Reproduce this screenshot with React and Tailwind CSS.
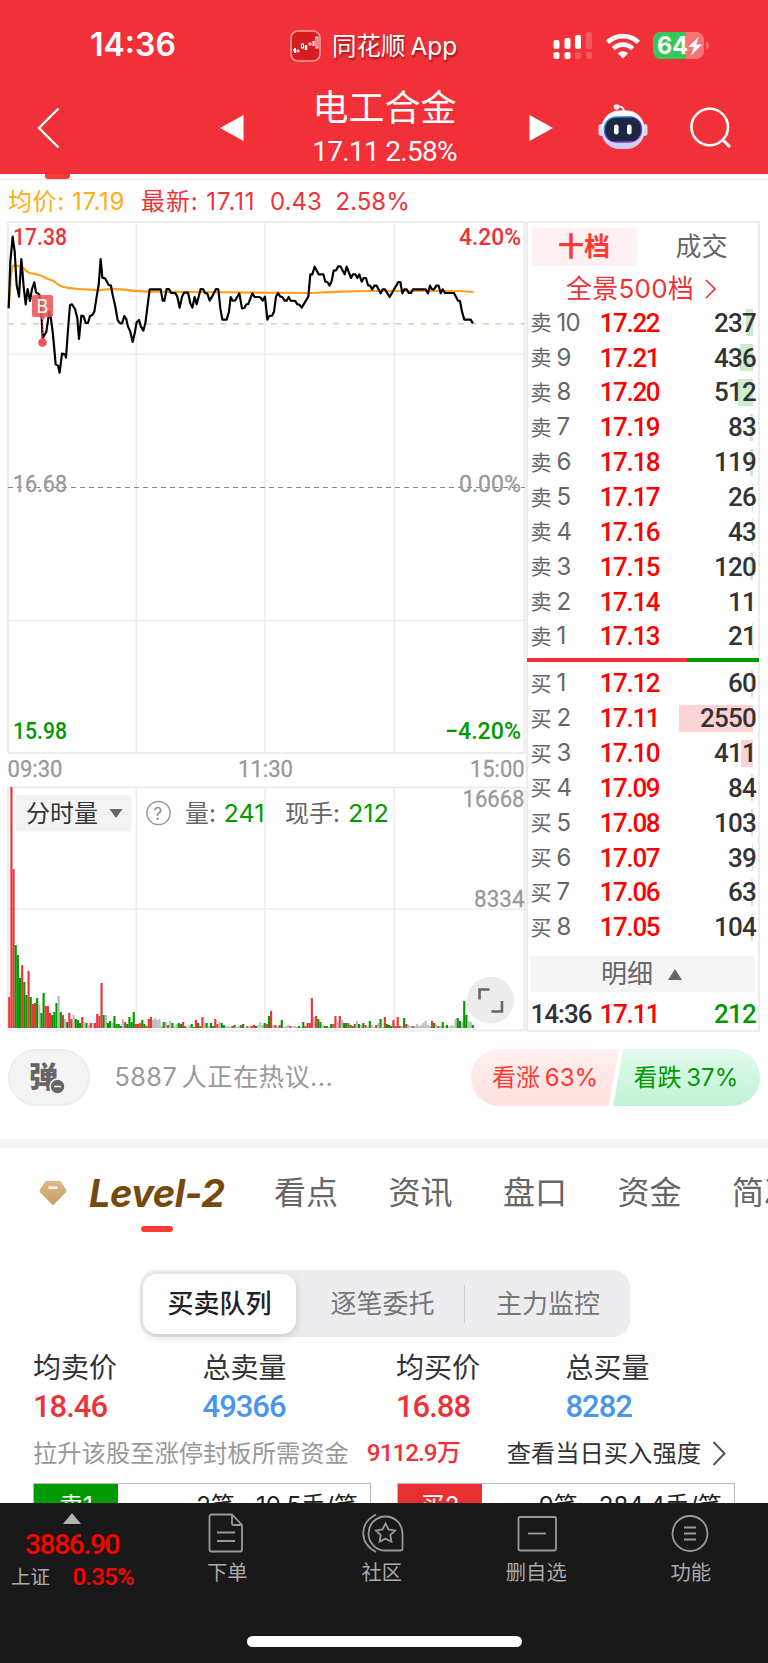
import React from 'react';

const NUM = "font-['Roboto','Noto_Sans_CJK_SC',sans-serif]";

const sells = [
  { label: '10', price: '17.22', qty: 237, bar: 7 },
  { label: '9', price: '17.21', qty: 436, bar: 13 },
  { label: '8', price: '17.20', qty: 512, bar: 15 },
  { label: '7', price: '17.19', qty: 83, bar: 3 },
  { label: '6', price: '17.18', qty: 119, bar: 3 },
  { label: '5', price: '17.17', qty: 26, bar: 1 },
  { label: '4', price: '17.16', qty: 43, bar: 1 },
  { label: '3', price: '17.15', qty: 120, bar: 3 },
  { label: '2', price: '17.14', qty: 11, bar: 0 },
  { label: '1', price: '17.13', qty: 21, bar: 1 },
];

const buys = [
  { label: '1', price: '17.12', qty: 60, bar: 2 },
  { label: '2', price: '17.11', qty: 2550, bar: 74 },
  { label: '3', price: '17.10', qty: 411, bar: 12 },
  { label: '4', price: '17.09', qty: 84, bar: 2 },
  { label: '5', price: '17.08', qty: 103, bar: 2 },
  { label: '6', price: '17.07', qty: 39, bar: 1 },
  { label: '7', price: '17.06', qty: 63, bar: 2 },
  { label: '8', price: '17.05', qty: 104, bar: 2 },
];

// price curve, in thirds of a pixel
const morning =
  '26,280 31,140 38,65 44,110 50,210 57,245 64,132 71,215 77,268 83,222 90,258 96,222 103,202 108,232 118,238 124,290 128,370 139,350 148,290 152,305 158,350 162,392 167,448 174,452 179,473 186,416 195,418 198,428 204,345 210,270 216,268 225,282 232,310 237,372 244,302 251,304 257,324 264,324 270,303 277,300 283,290 290,245 296,210 302,132 307,188 315,190 326,210 333,212 338,240 345,270 353,315 360,325 366,325 373,303 379,313 384,335 391,350 398,381 404,355 410,322 417,315 423,335 430,347 436,325 443,270 449,223 482,223 488,257 493,257 500,222 507,222 513,234 526,234 532,245 539,278 546,245 552,233 564,233 571,265 577,278 584,246 590,268 596,245 602,222 609,222 615,234 622,236 629,257 636,245 648,222 655,223 661,280 667,314 680,314 687,290 692,246 698,257 706,256 718,235 726,280 733,279 739,268 745,267 757,235 764,246 780,246';
const afternoon =
  '0,246 8,257 15,245 22,314 28,303 36,302 42,290 48,245 54,234 61,245 67,246 74,257 80,257 86,246 92,257 106,258 112,268 118,269 125,278 145,245 151,178 157,178 164,155 176,178 190,178 196,200 202,201 209,212 215,198 221,167 228,166 235,154 241,154 254,178 260,155 273,189 279,178 286,178 292,189 298,178 305,200 311,189 318,189 324,211 330,212 337,223 343,212 350,212 362,235 368,223 375,223 389,246 415,201 421,201 427,235 433,223 440,223 446,234 453,234 459,223 497,223 504,235 510,212 516,223 522,223 529,212 536,212 542,235 548,223 555,234 582,234 594,257 600,258 606,290 613,314 632,314 639,325';
const average =
  'M26,280 C30,215 33,158 39,152 C50,148 62,155 72,161 C78,166 80,173 94,175 C110,178 122,180 130,185 C140,193 150,193 160,198 C172,206 172,212 192,216 C215,223 250,222 300,226 C320,222 350,222 375,224 C400,229 430,230 470,230 L600,231 L780,233 L930,234 L1020,230 L1110,228 L1380,228 L1420,231';

// one bar per minute: r = up, g = down, n = flat
const volume =
  'r31 r241 r159 g83 g73 g50 r63 g46 g33 r57 g31 r24 r25 g30 n23 g15 g35 r22 r22 r15 g13 g16 g25 n32 g16 r13 n9 g6 r15 r9 n13 g9 g8 g5 r11 n6 g5 n3 r5 n5 r5 r14 r12 r45 g13 n13 g5 g7 n5 g12 g4 g4 g2 n9 r6 g4 g11 g6 g16 r4 r4 r5 g8 g4 r2 r9 r11 n8 n10 n8 n9 n2 g6 n6 r3 n7 g5 n2 n4 g5 g4 r6 r2 n1 n3 g4 g1 r8 g5 r2 r11 n5 g5 n2 g5 g2 r9 r4 n6 g5 g3 n2 n2 n1 r2 g3 n1 n2 r3 g4 n1 r2 n2 r2 r3 g2 n3 n6 n3 g5 r4 g12 r17 n3 r3 n2 r3 g8 n1 n2 n3 r2 n2 n2 n1 g2 n1 g6 r2 r5 r5 r30 n11 r12 g9 g6 n3 g2 g2 n1 g4 r4 r12 n6 r12 n8 g5 g5 r5 g3 g2 r4 n7 g4 n3 g5 r3 n2 g7 n3 n1 r3 n5 g9 n1 r11 g4 g3 g2 r8 r2 r11 r2 n2 g10 r4 n3 n2 r2 n2 n4 n2 n3 n5 n7 n3 n2 r7 g5 n3 r2 n2 g6 n2 g3 n1 n3 n2 n9 g10 g7 n6 g27 g13 n7 n6 g3'.split(' ');
const barColor = { r: '#ee3338', g: '#009900', n: '#bbbbbb' };

function StatusBar() {
  return (
    <div className="h-[90px] pl-[90px] pr-[58px] flex items-center">
      <span className="w-[200px] text-[32px] leading-none font-semibold">14:36</span>
      <div className="flex items-center gap-[11px] mt-[2px] whitespace-nowrap">
        <svg width="31" height="32" viewBox="0 0 31 32">
          <rect x="1" y="1" width="29" height="30" rx="7" fill="#d81d22" stroke="#f79a9c" strokeWidth="1.6" />
          <g stroke="#fff" strokeWidth="1" fill="#fff">
            <path d="M3 20h2M5 18v5" strokeWidth="2" />
            <circle cx="8" cy="21" r="1.2" fill="none" />
            <rect x="11.5" y="14" width="2" height="4" fill="none" />
            <path d="M16 15v5" strokeWidth="2.5" />
            <circle cx="20" cy="14" r="1.2" fill="none" />
            <path d="M23.5 11v5" strokeWidth="2" />
            <rect x="26" y="7" width="2" height="11" fill="none" />
          </g>
        </svg>
        <span className="text-[24.5px] leading-none [word-spacing:-2px] [text-shadow:1px_2px_2px_rgba(90,0,0,0.6)]">同花顺 App</span>
      </div>
      <div className="ml-auto flex items-center justify-end gap-[13px] mt-[2px]">
        <svg width="40" height="28" viewBox="0 0 40 28" fill="#fff">
          <rect x="0.5" y="8" width="6" height="9" rx="2" />
          <rect x="11.5" y="6" width="6" height="11" rx="2" />
          <rect x="22" y="3" width="6" height="14" rx="2" />
          <rect x="33" y="0" width="6" height="17" rx="2" opacity="0.2" />
          <rect x="0.5" y="20" width="6" height="7" rx="2" />
          <rect x="11.5" y="20" width="6" height="7" rx="2" />
          <rect x="22" y="20" width="6" height="7" rx="2" opacity="0.2" />
          <rect x="33" y="20" width="6" height="7" rx="2" opacity="0.2" />
        </svg>
        <svg width="34" height="26" viewBox="0 0 34 26" fill="none" stroke="#fff" strokeWidth="4.6">
          <path d="M1.6 9.4a22 22 0 0 1 30.8 0" />
          <path d="M7.4 15.6a13.7 13.7 0 0 1 19.2 0" />
          <path d="M17 25.5l-5.2-5.2a7.4 7.4 0 0 1 10.4 0z" fill="#fff" stroke="none" />
        </svg>
        <svg width="57" height="28" viewBox="0 0 57 28">
          <clipPath id="battery"><rect width="51" height="27" rx="8" /></clipPath>
          <g clipPath="url(#battery)">
            <rect width="51" height="27" fill="#f77377" />
            <rect width="33" height="27" fill="#34c759" />
          </g>
          <path d="M53 9.5c4 1.5 4 6.500 0 8z" fill="#f77377" />
          <text x="4" y="22" fontSize="24" fontWeight="700" fill="#fff" textLength="31" lengthAdjust="spacingAndGlyphs">64</text>
          <path d="M46 4.500l-11 10.500h6l-3 8.500 11-11h-6z" fill="#fff" />
        </svg>
      </div>
    </div>
  );
}

function Robot() {
  return (
    <svg width="50" height="48" viewBox="0 0 50 48">
      <defs>
        <linearGradient id="shell" x1="0" y1="0" x2="0" y2="1">
          <stop offset="0" stopColor="#fff" />
          <stop offset="1" stopColor="#c9c8ee" />
        </linearGradient>
        <linearGradient id="rim" x1="0" y1="0" x2="1" y2="1">
          <stop offset="0" stopColor="#2cc7e6" />
          <stop offset="0.5" stopColor="#3d37c9" />
          <stop offset="1" stopColor="#b04be8" />
        </linearGradient>
      </defs>
      <path d="M18 4.5c4-2 7.5-1 8 4" fill="none" stroke="#f3e9f5" strokeWidth="2" />
      <circle cx="18.5" cy="4" r="2.8" fill="#f5eef8" />
      <rect x="0.5" y="21" width="6" height="12" rx="3" fill="#dcd9f3" />
      <rect x="43.5" y="21" width="6" height="12" rx="3" fill="#dcd9f3" />
      <rect x="3.5" y="7.500" width="43" height="38.5" rx="18" fill="url(#shell)" />
      <rect x="6.500" y="14" width="37" height="25" rx="11.500" fill="#1d2744" stroke="url(#rim)" strokeWidth="1.3" />
      <rect x="16" y="21.5" width="4.600" height="10" rx="2.3" fill="#fff" />
      <rect x="29" y="21.5" width="4.600" height="10" rx="2.3" fill="#fff" />
    </svg>
  );
}

function Header() {
  return (
    <div className="h-[174px] bg-[#f23038] text-white">
      <StatusBar />
      <div className="h-[84px] flex items-start">
        <div className="w-[220px] pl-[36px] pt-[17px]">
          <svg width="26" height="42" viewBox="0 0 26 42" fill="none" stroke="#fff" strokeWidth="2.4">
            <path d="M22.5 1.5L3 21l19.5 19.5" />
          </svg>
        </div>
        <svg width="24" height="26" viewBox="0 0 24 26" className="mt-[25px]"><path d="M0 13L23.5 0v26z" fill="#fff" /></svg>
        <div className="w-[285px] pr-[4px] flex flex-col items-center">
          <span className="text-[36px] leading-[36px] whitespace-nowrap">电工合金</span>
          <span className={`${NUM} text-[28px] leading-[32px] mt-[10px] whitespace-nowrap tracking-[-0.7px]`}>17.11 2.58%</span>
        </div>
        <svg width="24" height="26" viewBox="0 0 24 26" className="mt-[25px]"><path d="M24 13L0.5 0v26z" fill="#fff" /></svg>
        <div className="ml-[45px] mt-[13px]"><Robot /></div>
        <svg width="42" height="42" viewBox="0 0 42 42" fill="none" stroke="#fff" strokeWidth="2.6" className="ml-[42px] mt-[17px]">
          <circle cx="19.7" cy="20" r="18.3" />
          <path d="M32.5 32.5l7.5 7.5" strokeWidth="3" />
        </svg>
      </div>
    </div>
  );
}

function Summary() {
  return (
    <div className="h-[47px] flex flex-col">
      <div className="h-[6px] border-b border-[#e8e8e8] pl-[45px]">
        <div className="w-[25px] h-[5px] bg-[#ff3a33] rounded-b-[3px]"></div>
      </div>
      <div className="flex pl-[8px] pt-[7px] text-[24px] leading-[30px] text-[#ee3338] whitespace-pre">
        <span className="text-[#ffae13] w-[133px] tracking-[0.6px]">均价: 17.19</span>
        <span className="w-[129px] tracking-[0.9px]">最新: 17.11</span>
        <span className="w-[65.5px]">0.43</span>
        <span>2.58%</span>
      </div>
    </div>
  );
}

function Chart() {
  return (
    <svg width="526" height="811" viewBox="0 221 526 811" className="shrink-0 overflow-visible font-['Roboto','Noto_Sans_CJK_SC',sans-serif]">
      <g fill="none" stroke="#ececec" strokeWidth="1.5">
        <path d="M8 222H525M8 753H525M8 787.5H525M8 1030.5H525M8 222V753M524.5 222V753M8 787V1031M524.5 787V1031" strokeWidth="2" />
        <path d="M136.300 222V753M265 222V753M394.300 222V753M8 354.300H524M8 620.500H524" />
        <path d="M136.300 787V1031M265 787V1031M394.300 787V1031M8 909.300H524" />
      </g>
      <path d="M8 487.5H525" stroke="#888" strokeWidth="1.2" strokeDasharray="5 4" />
      <path d="M8 323.7H525" stroke="#e3cba7" strokeWidth="1.6" strokeDasharray="6 6.5" />
      <g transform="translate(0 215) scale(0.33333)" fill="none" strokeLinejoin="round">
        <path d={average} stroke="#ff9f1c" strokeWidth="6.5" />
        <polyline points={morning} stroke="#000" strokeWidth="6.5" />
        <polyline points={afternoon} transform="translate(780 0)" stroke="#000" strokeWidth="6.5" />
      </g>
      <path d="M42.7 318V340" stroke="#ee3338" strokeDasharray="2 1.5" />
      <path d="M34 295h17a2 2 0 0 1 2 2v18a2 2 0 0 1-2 2h-5.5l-3 3.5-3-3.5H34a2 2 0 0 1-2-2v-18a2 2 0 0 1 2-2z" fill="#ed5558" fillOpacity="0.88" />
      <text x="36.5" y="313" fontSize="18" fill="#fff" className="font-['Inter']">B</text>
      <circle cx="42.5" cy="342.5" r="4.3" fill="#ee5458" />

      <g fontSize="24" fontWeight="500">
        <text x="13" y="245" fill="#ee3338" textLength="54" lengthAdjust="spacingAndGlyphs">17.38</text>
        <text x="459" y="245" fill="#ee3338" textLength="62" lengthAdjust="spacingAndGlyphs">4.20%</text>
        <text x="13" y="738.5" fill="#009900" textLength="54" lengthAdjust="spacingAndGlyphs">15.98</text>
        <text x="445" y="738.5" fill="#009900" textLength="76" lengthAdjust="spacingAndGlyphs">−4.20%</text>
      </g>
      <g fontSize="24" fill="#999" stroke="#999" strokeWidth="0.3">
        <text x="13" y="491.5" textLength="54" lengthAdjust="spacingAndGlyphs">16.68</text>
        <text x="459" y="491.5" textLength="62" lengthAdjust="spacingAndGlyphs">0.00%</text>
        <text x="7.5" y="777" textLength="55" lengthAdjust="spacingAndGlyphs">09:30</text>
        <text x="238" y="777" textLength="55" lengthAdjust="spacingAndGlyphs">11:30</text>
        <text x="470" y="777" textLength="54.500" lengthAdjust="spacingAndGlyphs">15:00</text>
        <text x="462.5" y="807" textLength="62" lengthAdjust="spacingAndGlyphs">16668</text>
        <text x="474" y="907" textLength="50.500" lengthAdjust="spacingAndGlyphs">8334</text>
      </g>

      <g>
        {volume.map((bar, i) => {
          const h = Number(bar.slice(1));
          return <rect key={i} x={8.2 + i * 2.146} y={1028 - h} width="2.15" height={h} fill={barColor[bar[0]]} />;
        })}
      </g>

      <rect x="15.5" y="795" width="116.5" height="36.5" rx="3" fill="#f3f3f3" />
      <path d="M109.5 809h13l-6.5 9z" fill="#666" />
      <g fontSize="24" className="font-['Inter','Noto_Sans_CJK_SC',sans-serif]">
        <text x="26" y="822" fill="#333" textLength="72" lengthAdjust="spacingAndGlyphs">分时量</text>
        <circle cx="158.5" cy="813" r="11.6" fill="none" stroke="#999" strokeWidth="1.5" />
        <text x="153.5" y="819.500" fontSize="17" fill="#888">?</text>
        <text x="185" y="822" fill="#666">量:</text>
        <text x="223.5" y="821.500" fill="#009900" textLength="41" lengthAdjust="spacingAndGlyphs">241</text>
        <text x="285" y="822" fill="#666">现手:</text>
        <text x="348" y="821.500" fill="#009900" textLength="41" lengthAdjust="spacingAndGlyphs">212</text>
      </g>
      <circle cx="490.5" cy="1000.3" r="23.5" fill="#ececec" />
      <path d="M479.5 999.500V989.500H489.500M502 1001V1011.500H491.500" fill="none" stroke="#666" strokeWidth="2.6" />
    </svg>
  );
}

function BookRow({ side, row, tone }) {
  return (
    <div className="h-[34.86px] shrink-0 flex items-center pl-[2.5px] pr-[2px]">
      <span className="w-[26px] text-[21px] text-[#666]">{side}</span>
      <span className="w-[43px] text-[24px] text-[#666] tracking-[-0.8px]">{row.label}</span>
      <span className={`${NUM} text-[26px] font-medium text-[#ff0000] tracking-[-1.3px]`}>{row.price}</span>
      <div className="ml-auto relative h-[27px] flex items-center">
        <div className={`absolute right-[3.5px] top-0 h-[27px] ${tone}`} style={{ width: row.bar }}></div>
        <span className={`${NUM} relative text-[26px] font-medium text-[#333] tracking-[-0.8px]`}>{row.qty}</span>
      </div>
    </div>
  );
}

function OrderBook() {
  return (
    <div className="w-[234px] h-[811px] border-2 border-[#ececec] flex flex-col leading-none">
      <div className="shrink-0 flex items-center mt-[5px] pl-[3.5px] h-[38px] text-[26px]">
        <span className="w-[105px] h-full bg-[#fff1f1] rounded-[4px] text-[#ff3a33] font-bold flex items-center justify-center">十档</span>
        <span className="ml-[39px] text-[#666]">成交</span>
      </div>
      <div className="shrink-0 flex items-center pl-[38px] h-[40px] mt-[3px] text-[26px] text-[#ee3338] gap-[11px]">
        <span className="tracking-[0.25px]">全景500档</span>
        <svg width="11" height="20" viewBox="0 0 11 20" fill="none" stroke="#ee3338" strokeWidth="1.6"><path d="M1 1l9 9-9 9" /></svg>
      </div>
      <div className="shrink-0 mt-[-3.7px]">
        {sells.map((row) => <BookRow key={row.label} side="卖" row={row} tone="bg-[#cbebcb]" />)}
      </div>
      <div className="shrink-0 flex h-[4px] mt-[3.6px] mx-[-1px]">
        <div className="w-[160px] bg-[#ee3338]"></div>
        <div className="flex-1 bg-[#009900]"></div>
      </div>
      <div className="shrink-0 mt-[4.4px]">
        {buys.map((row) => <BookRow key={row.label} side="买" row={row} tone="bg-[#fbd3d4]" />)}
      </div>
      <div className="shrink-0 mx-[3px] mt-[11.7px] h-[36px] bg-[#f4f4f4] flex items-center pl-[70px] gap-[15px] text-[26px] text-[#666]">
        <span>明细</span>
        <svg width="14" height="11" viewBox="0 0 14 11"><path d="M0 11L7 0l7 11z" fill="#666" /></svg>
      </div>
      <div className={`${NUM} h-[37px] pt-[7px] flex items-center pl-[2.5px] pr-[2px] text-[26px] font-medium`}>
        <span className="w-[69px] text-[#333] tracking-[-1px]">14:36</span>
        <span className="text-[#ff0000] tracking-[-1.3px]">17.11</span>
        <span className="ml-auto text-[#009900] tracking-[-0.8px]">212</span>
      </div>
    </div>
  );
}

function Discussion() {
  return (
    <div className="h-[107px] px-[8px] pt-[17px] flex items-start">
      <div className="w-[82px] h-[57px] shrink-0 rounded-full bg-[#f4f4f4] border-2 border-[#eee] flex items-center pl-[19px]">
        <div className="relative leading-none">
          <span className="text-[29px] font-black text-[#666]">弹</span>
          <svg width="17" height="17" viewBox="0 0 17 17" className="absolute right-[-8px] bottom-[-3px]">
            <circle cx="8.5" cy="8.5" r="7.5" fill="#666" stroke="#f4f4f4" strokeWidth="1.5" />
            <path d="M5 8.5h7" stroke="#f4f4f4" strokeWidth="1.5" />
          </svg>
        </div>
      </div>
      <span className="ml-[24.5px] mt-[11px] text-[25.3px] leading-[34px] text-[#999] tracking-[0.4px] [word-spacing:-3px] whitespace-nowrap">5887 人正在热议...</span>
      <div className="ml-auto flex text-[24px] whitespace-nowrap [word-spacing:-2px]">
        <div className="w-[148px] h-[57px] pl-[21px] rounded-l-full flex items-center text-[#ff3a33] bg-linear-to-b from-[#fff0ef] to-[#ffe0de] [clip-path:polygon(0_0,100%_0,93%_100%,0_100%)]">
          看涨 63%
        </div>
        <div className="w-[147px] h-[57px] ml-[-6px] pl-[20.5px] rounded-r-full flex items-center text-[#009900] bg-linear-to-b from-[#e2faec] to-[#c0f2d6] [clip-path:polygon(7%_0,100%_0,100%_100%,0_100%)]">
          看跌 37%
        </div>
      </div>
    </div>
  );
}

function Tabs() {
  return (
    <div className="h-[122px] overflow-hidden">
      <div className="flex items-center h-[90px] pl-[39px] whitespace-nowrap leading-none">
        <svg width="28" height="26" viewBox="0 0 28 26" className="shrink-0">
          <defs>
            <linearGradient id="gem" x1="0" y1="0" x2="0" y2="1">
              <stop offset="0" stopColor="#dbb988" />
              <stop offset="1" stopColor="#c6a066" />
            </linearGradient>
          </defs>
          <path d="M6.5 1h15L27 9.5c.6 1 .5 2-.2 3L15 24.500c-.6.6-1.4.6-2 0L1.200 12.500c-.7-1-.8-2-.2-3z" fill="url(#gem)" />
          <rect x="9.5" y="6.5" width="9" height="2.4" rx="1" fill="#fff" />
        </svg>
        <span className="shrink-0 ml-[22px] w-[185px] text-[38px] font-bold italic text-[#754a0e] tracking-[-0.5px]">Level-2</span>
        <div className="shrink-0 flex gap-[50.5px] text-[32px] text-[#666]">
          <span>看点</span>
          <span>资讯</span>
          <span>盘口</span>
          <span>资金</span>
          <span>简况</span>
        </div>
      </div>
      <div className="w-[32px] h-[6px] mt-[-12px] ml-[141px] rounded-[3px] bg-[#ff3a30]"></div>
    </div>
  );
}

function Segment() {
  return (
    <div className="w-[490px] h-[67px] ml-[139.5px] rounded-[17px] bg-[#ededf0] p-[3.5px] flex items-center text-[26px] text-[#777] leading-none">
      <div className="w-[153px] h-full rounded-[14px] bg-white text-[#222] font-medium shadow-[1px_3px_8px_rgba(0,0,0,0.15)] flex items-center justify-center">买卖队列</div>
      <span className="ml-[34.5px]">逐笔委托</span>
      <div className="w-px h-[38px] bg-[#d0d0d4] ml-[29.5px]"></div>
      <span className="ml-[31px]">主力监控</span>
    </div>
  );
}

function Stat({ label, value, color }) {
  return (
    <div className="flex flex-col w-[170px]">
      <span className="text-[28px] leading-[38px] text-[#333]">{label}</span>
      <span className={`${NUM} text-[31px] leading-[38px] mt-[1px] font-medium tracking-[-1px] ${color}`}>{value}</span>
    </div>
  );
}

function Queue({ name, count, avg, color }) {
  return (
    <div className="w-[338px] h-[48px] border border-[#bbb] flex items-start text-[24px] text-[#222] leading-none whitespace-nowrap">
      <span className={`w-[84px] h-full pt-[10px] text-center text-white ${color}`}>{name}</span>
      <span className="ml-auto pt-[10px]">{count}</span>
      <span className="ml-[21px] mr-[12px] pt-[10px]">{avg}</span>
    </div>
  );
}

function LevelTwo() {
  return (
    <div className="px-[33px]">
      <div className="flex pt-[11.5px]">
        <Stat label="均卖价" value="18.46" color="text-[#ee3338]" />
        <div className="w-[194px]"><Stat label="总卖量" value="49366" color="text-[#4a94ec]" /></div>
        <Stat label="均买价" value="16.88" color="text-[#ee3338]" />
        <Stat label="总买量" value="8282" color="text-[#4a94ec]" />
      </div>
      <div className="flex items-center h-[56px] text-[24.3px] whitespace-nowrap leading-none">
        <span className="text-[#999]">拉升该股至涨停封板所需资金</span>
        <span className={`${NUM} ml-[18px] font-medium text-[#ee3338] tracking-[-1px]`}>9112.9万</span>
        <span className="ml-auto text-[#333]">查看当日买入强度</span>
        <svg width="14" height="25" viewBox="0 0 14 25" fill="none" stroke="#555" strokeWidth="2" className="ml-[11px] mr-[9px]"><path d="M1.5 1l11 11.5L1.5 24" /></svg>
      </div>
      <div className="flex gap-[26px] mt-[1.5px]">
        <Queue name="卖1" count="2笔" avg="10.5手/笔" color="bg-[#009900]" />
        <Queue name="买2" count="9笔" avg="284.4手/笔" color="bg-[#e93030]" />
      </div>
    </div>
  );
}

function NavItem({ label, children }) {
  return (
    <div className="flex-1 flex flex-col items-center pt-[10px]">
      <svg width="44" height="40" viewBox="0 0 44 40" fill="none" stroke="#999" strokeWidth="1.8">{children}</svg>
      <span className="mt-[10px] text-[20.3px] leading-[20px] text-[#aaa]">{label}</span>
    </div>
  );
}

function BottomNav() {
  return (
    <div className="h-[160px] bg-[#191919] flex flex-col">
      <div className="flex h-[133px]">
        <div className="w-[150px] pt-[10px]">
          <svg width="18" height="11" viewBox="0 0 18 11" className="ml-[63px]"><path d="M0 11L9 0l9 11z" fill="#b5b5b5" /></svg>
          <div className={`${NUM} ml-[25px] mt-[5px] text-[28px] leading-[32px] font-medium text-[#ff0000] tracking-[-1.3px]`}>3886.90</div>
          <div className="flex items-center pl-[11px] leading-[32px]">
            <span className="w-[61.5px] text-[19.5px] text-[#aaa]">上证</span>
            <span className={`${NUM} text-[24px] font-medium text-[#ff0000] tracking-[-0.8px]`}>0.35%</span>
          </div>
        </div>
        <NavItem label="下单">
          <path d="M27 1.500H6.500a2 2 0 0 0-2 2V36.500a2 2 0 0 0 2 2H35a2 2 0 0 0 2-2V12zM27 1.500V10.500a1.500 1.500 0 0 0 1.500 1.500H37M12 19.500H30M12 28H30" />
        </NavItem>
        <NavItem label="社区">
          <g transform="translate(1 0)">
            <path d="M15 1.500C-2 10 -2 30 15 39" />
            <path d="M24.500 3.500a17 17 0 0 0 0 34H40a1.500 1.500 0 0 0 1.500-1.500V20.500a17 17 0 0 0-17-17z" />
            <path d="M24.500 10.500l3 6 6.500 1-4.700 4.600 1.100 6.600-5.900-3.100-5.900 3.100 1.100-6.600-4.700-4.600 6.500-1z" />
          </g>
        </NavItem>
        <NavItem label="删自选">
          <rect x="4.500" y="4" width="37.500" height="33.500" rx="1.500" />
          <path d="M14 20.500H32" />
        </NavItem>
        <NavItem label="功能">
          <circle cx="21" cy="20.500" r="17.500" />
          <path d="M15 14.500h12M15 20.500h12M15 26.500h12" />
        </NavItem>
      </div>
      <div className="w-[275px] h-[11px] ml-[247px] rounded-full bg-white"></div>
    </div>
  );
}

function App() {
  return (
    <div className="w-[768px] bg-white font-['Inter','Noto_Sans_CJK_SC',sans-serif] overflow-hidden">
      <div className="h-[1503px] overflow-hidden">
        <Header />
        <Summary />
        <div className="flex">
          <Chart />
          <OrderBook />
        </div>
        <Discussion />
        <div className="h-[9px] bg-[#f4f4f4]"></div>
        <Tabs />
        <Segment />
        <LevelTwo />
      </div>
      <BottomNav />
    </div>
  );
}

export default App;
